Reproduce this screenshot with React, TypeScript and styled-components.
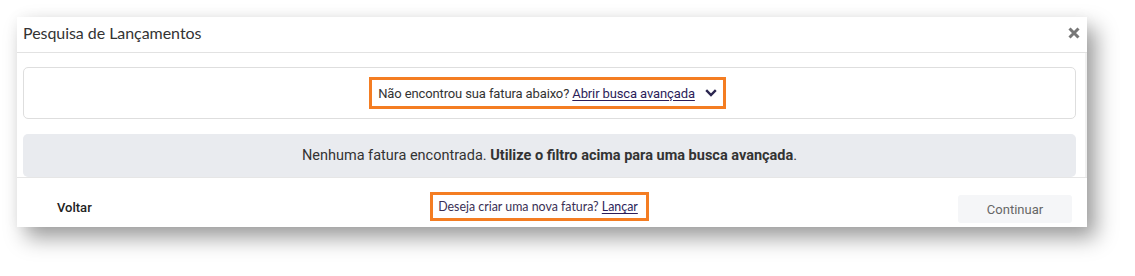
import React from "react";
import styled, { createGlobalStyle } from "styled-components";

const Global = createGlobalStyle`
  html, body { margin: 0; padding: 0; background: #ffffff; }
  body { font-family: Roboto, "Liberation Sans", Arial, sans-serif; }
`;

const Page = styled.div`
  padding: 17px 0 0 17px;
  width: 1135px;
  height: 276px;
  box-sizing: border-box;
`;

const Modal = styled.div`
  width: 1070px;
  background: #fff;
  box-shadow: 9px 11px 20px rgba(0, 0, 0, 0.38), 0 0 14px rgba(0, 0, 0, 0.04);
  display: flex;
  flex-direction: column;
`;

const Header = styled.div`
  height: 36px;
  box-sizing: border-box;
  border-bottom: 1px solid #e2e2e2;
  display: flex;
  align-items: center;
  justify-content: space-between;
  padding: 0 6px 4px 6px;
`;

const Title = styled.h1`
  margin: 0;
  font-family: Lato, "Open Sans", sans-serif;
  font-weight: 400;
  font-size: 16px;
  color: #333;
  letter-spacing: -0.05px;
`;

const Close = styled.button`
  border: 0;
  background: transparent;
  padding: 0;
  width: 14px;
  height: 14px;
  display: flex;
  align-items: center;
  justify-content: center;
  cursor: pointer;
`;

const Body = styled.div`
  padding: 14px 9px 0 6px;
  border-right: 2px solid #f1f1f1;
  display: flex;
  flex-direction: column;
  gap: 15px;
`;

const SearchCard = styled.div`
  height: 52px;
  box-sizing: border-box;
  border: 1px solid #dedede;
  border-radius: 5px;
  display: flex;
  align-items: center;
  justify-content: center;
`;

const Highlight = styled.div<{ $font?: string }>`
  border: 3px solid #f47d22;
  box-sizing: border-box;
  display: flex;
  align-items: center;
  gap: 10px;
  font-family: ${(p) => p.$font || "Roboto, 'Liberation Sans', sans-serif"};
  font-size: 13px;
  color: #333;
`;

const AdvRow = styled(Highlight)`
  height: 32px;
  padding: 0 6px 0 6px;
  margin-right: 4px;
  letter-spacing: -0.12px;
`;

const Link = styled.a`
  color: #2b1d59;
  text-decoration: underline;
  text-underline-offset: 2px;
  cursor: pointer;
`;

const Empty = styled.div`
  height: 43px;
  background: #e9ebef;
  border-radius: 5px;
  display: flex;
  align-items: center;
  justify-content: center;
  font-size: 14.5px;
  color: #333;
`;

const Footer = styled.div`
  height: 50px;
  box-sizing: border-box;
  border-top: 1px solid #e6e6e6;
  display: flex;
  align-items: center;
  justify-content: space-between;
  padding: 0 15px 0 6px;
`;

const BackButton = styled.button`
  width: 98px;
  height: 28px;
  border: 0;
  background: transparent;
  text-align: left;
  padding: 0 0 0 34px;
  font-family: Roboto, sans-serif;
  font-weight: 500;
  font-size: 13px;
  color: #222;
  margin-top: 10px;
`;

const CreateRow = styled(Highlight)`
  height: 29px;
  padding: 0 8px 0 5px;
  gap: 4px;
  margin-top: 8px;
  font-size: 12.4px;
  color: #3a2f55;
`;

const ContinueButton = styled.button`
  width: 114px;
  height: 28px;
  border: 0;
  border-radius: 3px;
  background: #f5f6f8;
  font-family: Roboto, sans-serif;
  font-size: 13px;
  color: #666;
  margin-top: 13px;
`;

export default function App() {
  return (
    <>
      <Global />
      <Page>
        <Modal>
          <Header>
            <Title>Pesquisa de Lançamentos</Title>
            <Close aria-label="Fechar">
              <svg width="12" height="12" viewBox="0 0 12 12">
                <path d="M1.5 1.5 L10.5 10.5 M10.5 1.5 L1.5 10.5" stroke="#777" strokeWidth="3" strokeLinecap="butt" />
              </svg>
            </Close>
          </Header>
          <Body>
            <SearchCard>
              <AdvRow>
                <span>
                  Não encontrou sua fatura abaixo? <Link>Abrir busca avançada</Link>
                </span>
                <svg width="12" height="8" viewBox="0 0 12 8">
                  <polyline points="1.2,1.2 6,6 10.8,1.2" fill="none" stroke="#2b2650" strokeWidth="2.4" />
                </svg>
              </AdvRow>
            </SearchCard>
            <Empty>
              <span>
                Nenhuma fatura encontrada. <b>Utilize o filtro acima para uma busca avançada</b>.
              </span>
            </Empty>
          </Body>
          <Footer>
            <BackButton>Voltar</BackButton>
            <CreateRow $font="Lato, 'Open Sans', sans-serif">
              <span>
                Deseja criar uma nova fatura? <Link>Lançar</Link>
              </span>
            </CreateRow>
            <ContinueButton>Continuar</ContinueButton>
          </Footer>
        </Modal>
      </Page>
    </>
  );
}
